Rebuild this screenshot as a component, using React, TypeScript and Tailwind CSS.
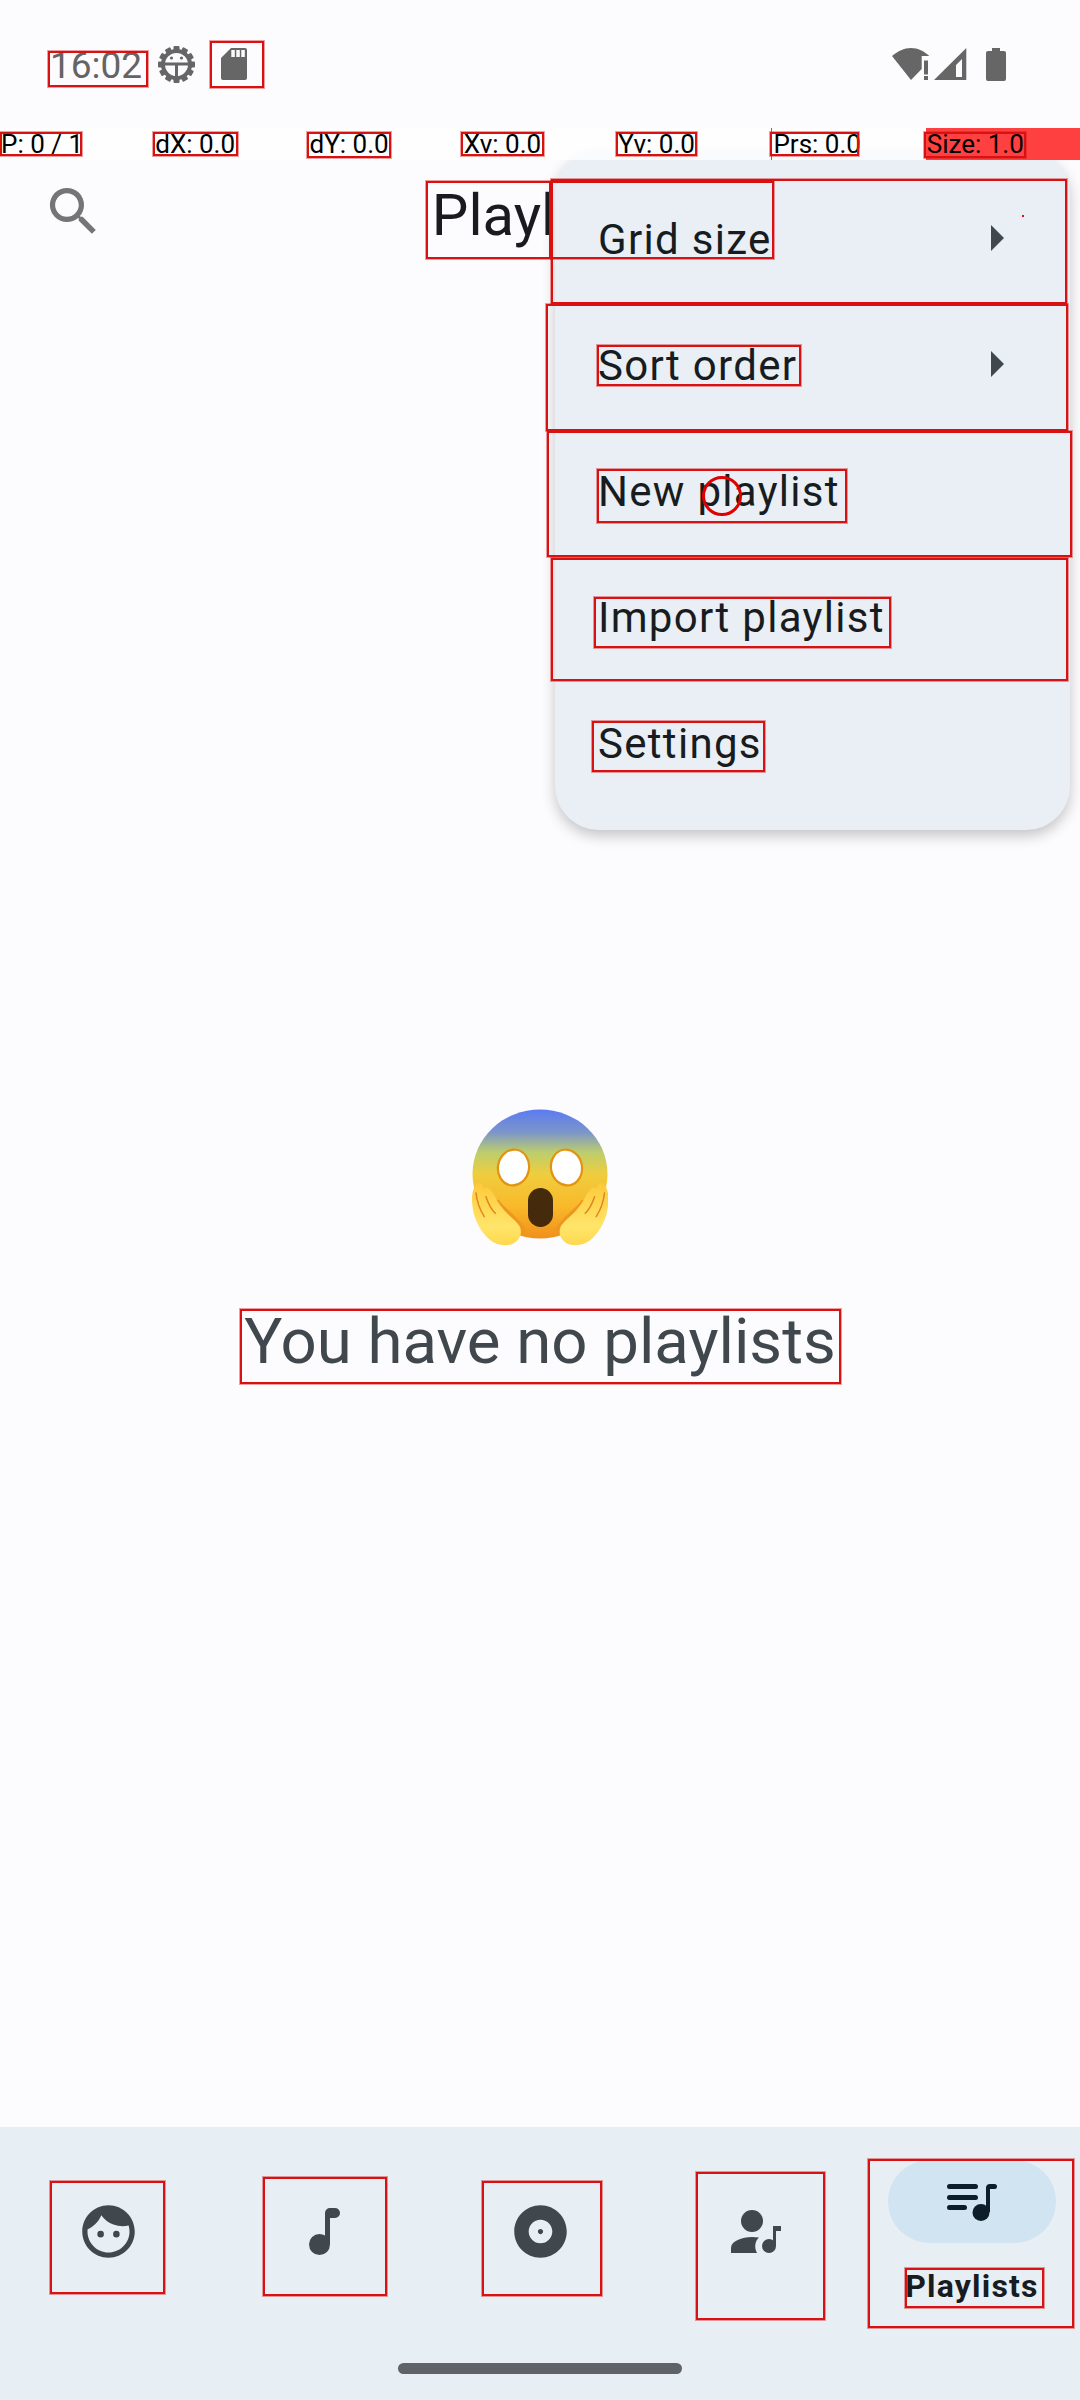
import { MdAlbum, MdFace, MdSearch } from "react-icons/md";

const pointerStats = ["P: 0 / 1", "dX: 0.0", "dY: 0.0", "Xv: 0.0", "Yv: 0.0", "Prs: 0.0", "Size: 1.0"];

const menuItems = [
  { label: "Grid size", submenu: true },
  { label: "Sort order", submenu: true },
  { label: "New playlist", submenu: false },
  { label: "Import playlist", submenu: false },
  { label: "Settings", submenu: false },
];

// Layout inspector rectangles drawn over the app, their place is the content itself
const debugBoxes = [
  "left-[48px] top-[51px] w-[100px] h-[36px]",
  "left-[210px] top-[41px] w-[54px] h-[47px]",
  "left-[0px] top-[132px] w-[82px] h-[24px]",
  "left-[153px] top-[132px] w-[85px] h-[24px]",
  "left-[307px] top-[132px] w-[84px] h-[26px]",
  "left-[461px] top-[132px] w-[83px] h-[24px]",
  "left-[616px] top-[132px] w-[81px] h-[24px]",
  "left-[770px] top-[132px] w-[89px] h-[24px]",
  "left-[924px] top-[132px] w-[102px] h-[26px]",
  "left-[426px] top-[181px] w-[125px] h-[78px]",
  "left-[551px] top-[179px] w-[516px] h-[125px]",
  "left-[551px] top-[181px] w-[223px] h-[78px]",
  "left-[546px] top-[304px] w-[522px] h-[127px]",
  "left-[597px] top-[345px] w-[204px] h-[41px]",
  "left-[547px] top-[431px] w-[525px] h-[126px]",
  "left-[597px] top-[469px] w-[250px] h-[54px]",
  "left-[551px] top-[558px] w-[517px] h-[123px]",
  "left-[594px] top-[597px] w-[297px] h-[51px]",
  "left-[592px] top-[721px] w-[173px] h-[51px]",
  "left-[240px] top-[1309px] w-[601px] h-[75px]",
  "left-[50px] top-[2181px] w-[115px] h-[113px]",
  "left-[263px] top-[2177px] w-[124px] h-[119px]",
  "left-[482px] top-[2181px] w-[120px] h-[115px]",
  "left-[696px] top-[2172px] w-[129px] h-[148px]",
  "left-[868px] top-[2159px] w-[206px] h-[169px]",
  "left-[905px] top-[2268px] w-[139px] h-[40px]",
];

function DebugGearIcon() {
  const teeth = [0, 30, 60, 90, 120, 150, 180, 210, 240, 270, 300, 330];
  return (
    <svg width="37" height="37" viewBox="0 0 37 37" fill="#666666">
      {teeth.map((a) => (
        <rect key={a} x="15.5" y="0" width="6" height="6" rx="1" transform={`rotate(${a} 18.5 18.5)`} />
      ))}
      <circle cx="18.5" cy="18.5" r="13.5" fill="none" stroke="#666666" strokeWidth="4" />
      <path d="M6 16.5h25v3H6z" />
      <path d="M17 18h3v14h-3z" />
      <circle cx="13.5" cy="12" r="1.6" />
      <circle cx="23.5" cy="12" r="1.6" />
    </svg>
  );
}

function SdCardIcon() {
  return (
    <svg width="26" height="32" viewBox="0 0 26 32" fill="#666666">
      <path d="M10 0h14a2 2 0 0 1 2 2v28a2 2 0 0 1-2 2H2a2 2 0 0 1-2-2V10z" />
      <path d="M10.300 2h3.500v7h-3.500zM15.300 2h3.500v7h-3.500zM20.300 2h3.500v7h-3.500z" fill="#fcfcff" />
    </svg>
  );
}

function WifiAlertIcon() {
  return (
    <svg width="38" height="33" viewBox="0 0 38 33" fill="#666666">
      <path d="M0 8C6 3 12 0 19 0c7 0 13 3 18.300 8H29.700v13L19 32z" />
      <path d="M32 12.500h4v14h-4zM32 28h4v4h-4z" />
    </svg>
  );
}

function SignalIcon() {
  return (
    <svg width="33" height="33" viewBox="0 0 33 33" fill="#666666">
      <path d="M32.300 0v32H0zM28 11 22 17V29h6z" fillRule="evenodd" />
    </svg>
  );
}

function BatteryIcon() {
  return (
    <svg width="20" height="33" viewBox="0 0 20 33" fill="#666666">
      <path d="M6 0h8v3h4a2 2 0 0 1 2 2v26a2 2 0 0 1-2 2H2a2 2 0 0 1-2-2V5a2 2 0 0 1 2-2h4z" />
    </svg>
  );
}

function SubmenuArrow() {
  return (
    <svg className="mb-[2px]" width="13" height="26" viewBox="0 0 13 26" fill="#41484d">
      <path d="M0 0l13 13L0 26z" />
    </svg>
  );
}

function MusicNoteIcon() {
  return (
    <svg width="31" height="47" viewBox="0 0 31 47" fill="#41484d">
      <circle cx="10.500" cy="36.500" r="10.500" />
      <path d="M16 36V5a5 5 0 0 1 5-5h5a5 5 0 0 1 0 10h-5v26z" />
    </svg>
  );
}

function PersonMusicIcon() {
  return (
    <svg width="50" height="43" viewBox="0 0 50 43" fill="#41484d">
      <circle cx="21" cy="11" r="11" />
      <path d="M0 43v-5c0-7 11-11 21-11 2.500 0 5 .2 7 .6-4 3.500-5 10-2 15.400z" />
      <circle cx="38" cy="36" r="7" />
      <path d="M42 16h8v5h-5v15h-3z" />
    </svg>
  );
}

function PlaylistMusicIcon() {
  return (
    <svg width="50" height="38" viewBox="0 0 50 38" fill="#0e1d2a">
      <rect x="0" y="1" width="31" height="5" rx="2.500" />
      <rect x="0" y="12" width="31" height="5" rx="2.500" />
      <rect x="0" y="22" width="20" height="5" rx="2.500" />
      <circle cx="34" cy="29.500" r="8.500" />
      <path d="M39 29V5a4 4 0 0 1 4-4h4.500a2.500 2.500 0 0 1 0 5H43v23z" />
    </svg>
  );
}

function ScreamingFace() {
  return (
    <svg width="136" height="137" viewBox="0 0 136 137">
      <defs>
        <linearGradient id="head" x1="0" y1="0" x2="0" y2="1">
          <stop offset="0" stopColor="#5b7bf2" />
          <stop offset="0.18" stopColor="#7d96c8" />
          <stop offset="0.33" stopColor="#bccd6e" />
          <stop offset="0.5" stopColor="#efcd3e" />
          <stop offset="0.75" stopColor="#f9b92a" />
          <stop offset="1" stopColor="#f0901a" />
        </linearGradient>
        <linearGradient id="hand" x1="0" y1="0" x2="0" y2="1">
          <stop offset="0" stopColor="#fdc93a" />
          <stop offset="0.7" stopColor="#ffe56a" />
          <stop offset="1" stopColor="#ffd84f" />
        </linearGradient>
      </defs>
      <ellipse cx="68" cy="65" rx="67.500" ry="64.500" fill="url(#head)" />
      <ellipse cx="41.500" cy="58.500" rx="15.500" ry="18" transform="rotate(10 41.500 58.500)" fill="#ffffff" stroke="#e2930f" strokeWidth="2.200" />
      <ellipse cx="94.500" cy="58.500" rx="15.500" ry="18" transform="rotate(-10 94.500 58.500)" fill="#ffffff" stroke="#e2930f" strokeWidth="2.200" />
      <rect x="56" y="79" width="25" height="39" rx="12.500" fill="#452b0c" />
      {[false, true].map((mirrored) => (
        <g key={String(mirrored)} transform={mirrored ? "matrix(-1 0 0 1 136.500 0)" : undefined}>
          <path d="M24 92C31 103 43 108 52 123" fill="none" stroke="#ef961f" strokeWidth="6" />
          <path
            d="M0 90C0 82 3 74 7.500 74C10 74 11 77 12 80C13 78 15 78 17 79.500C21 82 24 92 32 101C37 107 45 112 48 118C51 126 46 133 39 135.500C32 137 24 136 18 131C10 124 4 114 1.700 104C.7 99 0 95 0 90Z"
            fill="url(#hand)"
          />
          <path d="M4 84C5 93 8 101 12.300 107.700" fill="none" stroke="#e0861e" strokeWidth="1.500" strokeLinecap="round" />
          <path d="M14 87.700C16 94 19 100 23.300 104.300" fill="none" stroke="#e0861e" strokeWidth="1.500" strokeLinecap="round" />
        </g>
      ))}
    </svg>
  );
}

export default function App() {
  return (
    <div className="relative flex h-[2400px] w-[1080px] flex-col overflow-hidden bg-[#fcfcff] font-['Roboto',sans-serif]">
      {/* Status bar */}
      <div className="flex h-[128px] items-center justify-between pl-[50px] pr-[74px] text-[#646464]">
        <div className="flex items-center">
          <span className="pt-[2px] text-[37px] leading-none">16:02</span>
          <span className="ml-[16px] flex">
            <DebugGearIcon />
          </span>
          <span className="ml-[26px] flex">
            <SdCardIcon />
          </span>
        </div>
        <div className="flex items-center">
          <WifiAlertIcon />
          <span className="ml-[4px] flex">
            <SignalIcon />
          </span>
          <span className="ml-[19px] flex">
            <BatteryIcon />
          </span>
        </div>
      </div>

      {/* Pointer location strip */}
      <div className="relative z-20 grid h-[32px] grid-cols-7 bg-white/75 text-[26px] leading-[32px] text-black">
        {pointerStats.map((stat, i) => (
          <div
            key={stat}
            className={
              i === 6
                ? "whitespace-nowrap bg-[#ff4040] pl-[1px]"
                : i === 5
                  ? "whitespace-nowrap border-l border-[#c85050] pl-[1px]"
                  : "whitespace-nowrap pl-[1px]"
            }
          >
            {stat}
          </div>
        ))}
      </div>

      {/* Top app bar */}
      <div className="grid h-[110px] grid-cols-[1fr_auto_1fr] items-center">
        <div className="flex pb-[8px] pl-[42px]">
          <MdSearch className="text-[#757575]" size={63} />
        </div>
        <h1 className="text-[58px] font-normal leading-none text-[#1b1b1f]">Playlists</h1>
        <div />
      </div>

      {/* Empty state */}
      <main className="flex flex-1 flex-col items-center pt-[839px]">
        <ScreamingFace />
        <p className="mt-[54px] text-[63.500px] leading-[84px] text-[#41484d]">You have no playlists</p>
      </main>

      {/* Bottom navigation */}
      <nav className="relative grid h-[273px] grid-cols-5 bg-[#e7eef4]">
        <div className="flex justify-center pt-[73px]">
          <MdFace className="text-[#41484d]" size={63} />
        </div>
        <div className="flex justify-center pt-[81px]">
          <MusicNoteIcon />
        </div>
        <div className="flex justify-center pt-[73px]">
          <MdAlbum className="text-[#41484d]" size={63} />
        </div>
        <div className="flex justify-center pt-[83px]">
          <PersonMusicIcon />
        </div>
        <div className="flex flex-col items-center pt-[33px]">
          <div className="flex h-[83px] w-[168px] items-center justify-center rounded-full bg-[#d1e4f2]">
            <PlaylistMusicIcon />
          </div>
          <span className="mt-[23px] text-[32px] font-bold leading-[40px] tracking-[1.2px] text-[#181c20]">
            Playlists
          </span>
        </div>
        <div className="absolute bottom-[26px] left-[398px] h-[11px] w-[284px] rounded-full bg-[#5f6367]" />
      </nav>

      {/* Overflow menu */}
      <div className="absolute left-[555px] top-[150px] z-10 w-[515px] rounded-[44px] bg-[#e9eff4] pb-[24px] pt-[26px] shadow-[0_6px_14px_rgba(0,0,0,0.22)]">
        {menuItems.map((item) => (
          <div key={item.label} className="flex h-[126px] items-center justify-between pl-[43px] pr-[66px]">
            <span className="mt-[2px] text-[42px] leading-none tracking-[1.3px] text-[#181c20]">{item.label}</span>
            {item.submenu && <SubmenuArrow />}
          </div>
        ))}
      </div>

      {/* Inspector overlay */}
      <div className="pointer-events-none absolute inset-0 z-30">
        {debugBoxes.map((box) => (
          <div key={box} className={`absolute border-2 border-[#d81212] ring-1 ring-[#d81212]/40 ${box}`} />
        ))}
        <div className="absolute left-[702px] top-[476px] h-[40px] w-[40px] rounded-full border-[3px] border-[#e00000]" />
        <div className="absolute left-[1022px] top-[215px] h-[2px] w-[2px] bg-[#d81212]" />
      </div>
    </div>
  );
}
